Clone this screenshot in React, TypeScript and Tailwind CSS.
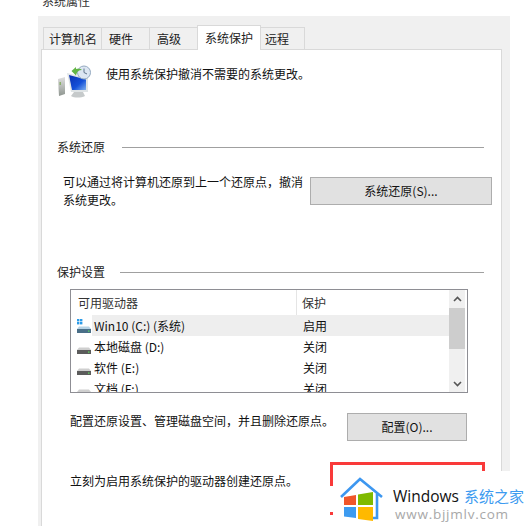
const font = { fontFamily: '"Noto Sans CJK SC", "Liberation Sans", sans-serif' };

function Tab({ label, w, active }: { label: string; w: string; active?: boolean }) {
  return (
    <div
      className={`${w} flex items-center justify-start border-[#d9d9d9] border-t border-r ${
        active ? "h-[25px] bg-white border-l -ml-px relative z-10 -mb-px" : "h-[22px] bg-[#f0f0f0]"
      }`}
    >
      {label}
    </div>
  );
}

function Legend({ label, w }: { label: string; w: string }) {
  return (
    <div className="flex items-center pr-[17px]">
      <span className={`${w} leading-[18px] text-[#222]`}>{label}</span>
      <div className="flex-1 h-px bg-[#a0a0a0]" />
    </div>
  );
}

function Btn({ label, w, h }: { label: string; w: string; h: string }) {
  return (
    <div className={`${w} ${h} shrink-0 flex items-center justify-center bg-[#e1e1e1] border border-[#adadad] text-[#111]`}>
      {label}
    </div>
  );
}

function Drive({ system }: { system?: boolean }) {
  return (
    <svg width="16" height="16" viewBox="0 0 16 16" className="shrink-0">
      {system && (
        <g fill="#2b9be8">
          <rect x="1" y="1" width="2.4" height="2.4" />
          <rect x="4" y="1" width="2.4" height="2.4" />
          <rect x="1" y="4" width="2.4" height="2.4" />
          <rect x="4" y="4" width="2.4" height="2.4" />
        </g>
      )}
      <path d="M3 8.5 L13 8.5 L15 11 L1 11 Z" fill={system ? "#b6d3e6" : "#cfcfcf"} />
      <rect x="1" y="11" width="14" height="4" fill={system ? "#4a6f88" : "#5c5c5c"} />
      <rect x="12" y="12.5" width="1.5" height="1.2" fill="#5fe05f" />
    </svg>
  );
}

function Row({ name, state, selected, system }: { name: string; state: string; selected?: boolean; system?: boolean }) {
  return (
    <div className="flex h-[21px] items-center shrink-0">
      <div className="w-[5px]" />
      <Drive system={system} />
      <div className={`flex flex-1 h-full items-center ${selected ? "bg-[#eeeeee]" : ""}`}>
        <span className="w-[205px] pl-[2px] shrink-0">{name}</span>
        <span className="pl-[6px]">{state}</span>
      </div>
    </div>
  );
}

function MonitorIcon() {
  return (
    <svg width="36" height="34" viewBox="0 0 36 34">
      <defs>
        <linearGradient id="scr" x1="0" y1="0" x2="1" y2="1">
          <stop offset="0" stopColor="#0a2fb0" />
          <stop offset="0.6" stopColor="#1450d8" />
          <stop offset="1" stopColor="#7fb0ee" />
        </linearGradient>
        <linearGradient id="case" x1="0" y1="0" x2="0" y2="1">
          <stop offset="0" stopColor="#e0e0e0" />
          <stop offset="1" stopColor="#8f9690" />
        </linearGradient>
      </defs>
      <path d="M1 14 L8 12 L8 29 L2 31 Z" fill="url(#case)" />
      <rect x="2.5" y="17" width="1.5" height="3" fill="#8ab06a" />
      <path d="M10 8 L31 13 L31 27 L14 27 Z" fill="#dfe4e6" />
      <path d="M12 10 L29 14.5 L29 25 L15 25 Z" fill="url(#scr)" />
      <path d="M17 27 L26 27 L28 31 C24 33 17 33 14 31 Z" fill="#c6cacb" />
      <circle cx="27" cy="7.5" r="6.5" fill="#dce6f2" stroke="#94a9c0" />
      <path d="M27 3.5 V7.5 L30 9" fill="none" stroke="#60758c" strokeWidth="1" />
      <path d="M14.5 6 L19 2 L19 4 C22 3.5 24 4 25 5 C22 5 20 6.5 19.5 9 L19 10.5 Z" fill="#62b545" />
    </svg>
  );
}

function Chevron({ up }: { up?: boolean }) {
  return (
    <svg width="9" height="6" viewBox="0 0 9 6">
      <path d={up ? "M1 5 L4.5 1.5 L8 5" : "M1 1 L4.5 4.5 L8 1"} fill="none" stroke="#555" strokeWidth="1.6" />
    </svg>
  );
}

function WinLogo() {
  return (
    <svg width="46" height="46" viewBox="0 0 46 46">
      <path
        d="M2 20 L21 2 L43 20 M38 16 V41 L32 41"
        fill="none"
        stroke="#3d97f0"
        strokeWidth="2.6"
        strokeLinejoin="miter"
      />
      <path d="M5 20 L17 18 V28 L5 28 Z" fill="#f0562a" />
      <path d="M19 17.5 L34 15 V28 L19 28 Z" fill="#7fba00" />
      <path d="M5 30 L17 30 V41 L5 39.5 Z" fill="#3d9bf0" />
      <path d="M19 30 L34 30 V44 L19 42 Z" fill="#ffb900" />
    </svg>
  );
}

export default function App() {
  return (
    <div style={font} className="relative w-[529px] h-[526px] overflow-hidden bg-white text-[12px] text-[#111]">
      <div className="absolute left-[42px] -top-[8px] text-[#333]">系统属性</div>

      <div className="ml-[38px] mt-[16px] w-[472px] h-[510px] flex flex-col bg-[#f0f0f0] pl-[3px] pr-[8px] pt-[9px]">
        <div className="flex items-end h-[24px] pl-[2px] relative z-10 text-[#222]">
          <Tab label="计算机名" w="w-[59px] border-l pl-[5px]" />
          <Tab label="硬件" w="w-[48px] pl-[7px]" />
          <Tab label="高级" w="w-[48px] pl-[7px]" />
          <Tab label="系统保护" w="w-[64px] pl-[7px]" active />
          <Tab label="远程" w="w-[44px] pl-[4px]" />
        </div>

        <div className="flex-1 bg-white border-x border-t border-[#d9d9d9] pl-[15px]">
          <div className="flex items-start h-[64px] pt-[15px]">
            <MonitorIcon />
            <span className="ml-[13px] leading-[18px]">使用系统保护撤消不需要的系统更改。</span>
          </div>

          <div className="mt-[24px]">
            <Legend label="系统还原" w="w-[65px]" />
          </div>

          <div className="flex mt-[21px] pl-[6px]">
            <p className="w-[241px] mr-[6px] leading-[18px] -mt-[4px]">可以通过将计算机还原到上一个还原点，撤消系统更改。</p>
            <Btn label="系统还原(S)..." w="w-[182px]" h="h-[28px]" />
          </div>

          <div className="mt-[54px]">
            <Legend label="保护设置" w="w-[63px]" />
          </div>

          <div className="ml-[13px] mt-[8px] w-[398px] h-[104px] border-[1.5px] border-[#8e8e94] flex overflow-hidden">
            <div className="flex-1 flex flex-col min-w-0">
              <div className="flex h-[25px] shrink-0 items-center text-[#333]">
                <span className="w-[226px] pl-[7px] h-full flex items-center border-r border-[#e5e5e5]">可用驱动器</span>
                <span className="pl-[5px]">保护</span>
              </div>
              <Row name="Win10 (C:) (系统)" state="启用" selected system />
              <Row name="本地磁盘 (D:)" state="关闭" />
              <Row name="软件 (E:)" state="关闭" />
              <Row name="文档 (F:)" state="关闭" />
            </div>
            <div className="w-[16px] mr-[2px] flex flex-col items-center bg-[#f0f0f0] shrink-0">
              <div className="h-[18px] w-full flex items-center justify-center shrink-0">
                <Chevron up />
              </div>
              <div className="h-[41px] w-full bg-[#cdcdcd] shrink-0" />
              <div className="flex-1" />
              <div className="h-[17px] w-full flex items-center justify-center shrink-0">
                <Chevron />
              </div>
            </div>
          </div>

          <div className="flex items-start justify-between ml-[13px] mt-[20px] w-[397px]">
            <span className="leading-[18px] -mt-px">配置还原设置、管理磁盘空间，并且删除还原点。</span>
            <Btn label="配置(O)..." w="w-[120px]" h="h-[28px]" />
          </div>

          <div className="ml-[13px] mt-[31px] leading-[18px]">立刻为启用系统保护的驱动器创建还原点。</div>
        </div>
      </div>

      {/* watermark and annotation lying over the page */}
      <div className="absolute left-[330px] top-[462px] w-[155px] h-[53px] border-x-[3px] border-t-[3px] border-[#f93a3a]" />
      <div className="absolute left-[333px] top-[471px] w-[196px] h-[41px] bg-white" />
      <div className="absolute left-[327px] top-[486px] w-[7px] h-[26px] bg-white" />
      <div className="absolute left-[333px] top-[512px] w-[196px] h-[14px] bg-white" />
      <div className="absolute left-[339px] top-[477px]">
        <WinLogo />
      </div>
      <div className="absolute left-[393px] top-[486px] flex items-baseline whitespace-nowrap">
        <span className="text-[15.5px] leading-[20px] text-[#111] font-medium" style={{ fontFamily: '"Open Sans", sans-serif' }}>
          Windows
        </span>
        <span className="ml-[5px] text-[15px] leading-[20px] text-[#3d9bf0]">系统之家</span>
      </div>
      <div
        className="absolute left-[395px] top-[506px] text-[13.5px] leading-[16px] tracking-[0.75px] text-[#a8a8a8]"
        style={{ fontFamily: '"Open Sans", sans-serif' }}
      >
        www.bjjmlv.com
      </div>
    </div>
  );
}
